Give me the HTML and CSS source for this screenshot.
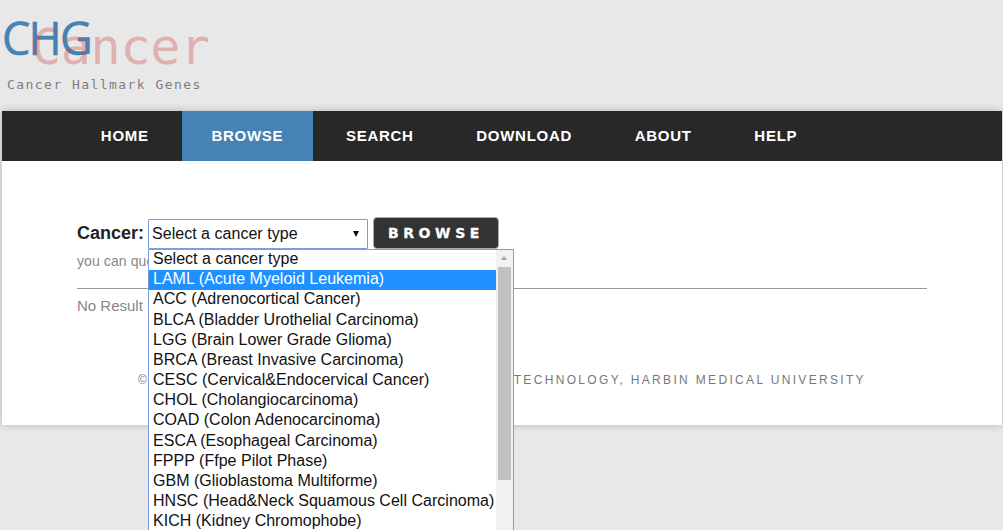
FILE: index.html
```html
<!DOCTYPE html>
<html lang="en">
<head>
<meta charset="utf-8">
<title>CHG Cancer Hallmark Genes</title>
<link rel="stylesheet" href="styles.css">
</head>
<body>
<header class="masthead">
  <div class="logo">
    <span class="logo-chg">CHG</span>
    <span class="logo-cancer">Cancer</span>
  </div>
  <div class="tagline">Cancer Hallmark Genes</div>
</header>
<div class="card">
  <nav class="nav">
    <a class="nav-item">HOME</a>
    <a class="nav-item active">BROWSE</a>
    <a class="nav-item">SEARCH</a>
    <a class="nav-item">DOWNLOAD</a>
    <a class="nav-item">ABOUT</a>
    <a class="nav-item">HELP</a>
  </nav>
  <main class="content">
    <div class="form-row">
      <label class="form-label">Cancer:</label>
      <div class="select-wrap">
        <div class="select">
          <span>Select a cancer type</span>
          <span class="caret"></span>
        </div>
        <div class="dropdown">
          <ul class="options">
            <li>Select a cancer type</li>
            <li class="selected">LAML (Acute Myeloid Leukemia)</li>
            <li>ACC (Adrenocortical Cancer)</li>
            <li>BLCA (Bladder Urothelial Carcinoma)</li>
            <li>LGG (Brain Lower Grade Glioma)</li>
            <li>BRCA (Breast Invasive Carcinoma)</li>
            <li>CESC (Cervical&amp;Endocervical Cancer)</li>
            <li>CHOL (Cholangiocarcinoma)</li>
            <li>COAD (Colon Adenocarcinoma)</li>
            <li>ESCA (Esophageal Carcinoma)</li>
            <li>FPPP (Ffpe Pilot Phase)</li>
            <li>GBM (Glioblastoma Multiforme)</li>
            <li>HNSC (Head&amp;Neck Squamous Cell Carcinoma)</li>
            <li>KICH (Kidney Chromophobe)</li>
          </ul>
          <div class="scrollbar">
            <span class="scroll-up"></span>
            <span class="scroll-thumb"></span>
          </div>
        </div>
      </div>
      <button class="browse-btn" type="button">BROWSE</button>
    </div>
    <p class="hint">you can query genes by cancer type</p>
    <hr class="rule">
    <p class="result">No Result Found</p>
    <footer class="footer">© COLLEGE OF BIOINFORMATICS SCIENCE AND TECHNOLOGY, HARBIN MEDICAL UNIVERSITY</footer>
  </main>
</div>
</body>
</html>
```
FILE: styles.css
```css
* { box-sizing: border-box; }
html, body { height: 100%; overflow: hidden; }
body {
  margin: 0;
  background: #e8e8e8;
  font-family: "Liberation Sans", Arial, sans-serif;
}
.masthead {
  height: 111px;
  padding: 14px 0 0 2px;
}
.logo {
  position: relative;
  height: 60px;
}
.logo-chg {
  position: absolute;
  left: 0;
  top: 1px;
  z-index: 1;
  font-family: "Open Sans", sans-serif;
  font-size: 45px;
  line-height: 46px;
  letter-spacing: -1.8px;
  -webkit-text-stroke: 0.5px #4682b4;
  color: #4682b4;
}
.logo-cancer {
  position: absolute;
  left: 29px;
  top: 6px;
  z-index: 2;
  font-family: "DejaVu Sans Mono", monospace;
  font-size: 50px;
  line-height: 54px;
  letter-spacing: -0.3px;
  color: rgba(205, 72, 72, 0.35);
}
.tagline {
  padding: 3px 0 0 5px;
  font-family: "DejaVu Sans Mono", monospace;
  font-size: 13px;
  line-height: 16px;
  letter-spacing: 1.45px;
  color: #7f7f7f;
}
.card {
  margin-left: 2px;
  width: 1000px;
  height: 314px;
  background: #fff;
  box-shadow: 0 0 8px rgba(0, 0, 0, 0.22);
}
.nav {
  display: flex;
  gap: 4px;
  height: 50px;
  padding-left: 69.5px;
  background: #282828;
}
.nav-item {
  padding: 0 29.35px;
  font-size: 15px;
  font-weight: 700;
  line-height: 50px;
  letter-spacing: 0.72px;
  color: #fff;
}
.nav-item.active { background: #4682b4; }
.content {
  position: relative;
  padding: 57px 75px 0;
}
.form-row {
  display: flex;
  align-items: flex-start;
  height: 31px;
}
.form-label {
  width: 71px;
  font-size: 18px;
  font-weight: 700;
  line-height: 30px;
  color: #222;
}
.select-wrap {
  position: relative;
  width: 220px;
  margin-top: 1px;
  margin-right: 5px;
}
.select {
  display: flex;
  justify-content: space-between;
  align-items: center;
  height: 30px;
  padding: 0 8px 0 3px;
  border: 1px solid #7b9ee0;
  border-radius: 1px;
  font-size: 16px;
  letter-spacing: 0.03px;
  color: #111;
  background: #fff;
}
.caret {
  width: 0;
  height: 0;
  border-left: 3.5px solid transparent;
  border-right: 3.5px solid transparent;
  border-top: 6px solid #111;
}
.dropdown {
  position: absolute;
  left: 0;
  top: 30px;
  z-index: 5;
  display: flex;
  width: 366px;
  height: 300px;
  border: 1px solid #7b9ee0;
  background: #fff;
}
.options {
  flex: 1;
  margin: 0;
  padding: 0;
  list-style: none;
}
.options li {
  height: 20.18px;
  padding-left: 4px;
  font-size: 16px;
  line-height: 18px;
  letter-spacing: 0.02px;
  color: #111;
  white-space: nowrap;
}
.options li.selected {
  background: #1e90ff;
  color: #fff;
}
.scrollbar {
  position: relative;
  width: 17px;
  background: #f1f1f1;
}
.scroll-up {
  position: absolute;
  left: 5px;
  top: 6px;
  width: 0;
  height: 0;
  border-left: 3.5px solid transparent;
  border-right: 3.5px solid transparent;
  border-bottom: 4px solid #a3a3a3;
}
.scroll-thumb {
  position: absolute;
  left: 2px;
  top: 17px;
  width: 13px;
  height: 213px;
  background: #c1c1c1;
}
.browse-btn {
  width: 126px;
  height: 32px;
  margin-top: -1px;
  padding: 0;
  border: 1px solid #aaa;
  border-radius: 4px;
  background: #333;
  color: #fff;
  font-family: "DejaVu Sans", sans-serif;
  font-size: 14px;
  font-weight: 700;
  letter-spacing: 4.6px;
  -webkit-text-stroke: 0.3px #fff;
  text-align: center;
}
.hint {
  margin: 3px 0 0;
  font-size: 14px;
  letter-spacing: 0.1px;
  line-height: 18px;
  color: #888;
}
.rule {
  margin: 18px 0 0;
  border: 0;
  border-top: 1px solid #999;
}
.result {
  margin: 8px 0 0;
  font-size: 15px;
  line-height: 18px;
  color: #888;
}
.footer {
  margin-top: 57px;
  text-align: center;
  font-size: 12px;
  line-height: 16px;
  letter-spacing: 2.33px;
  color: #777;
  white-space: nowrap;
}
```
